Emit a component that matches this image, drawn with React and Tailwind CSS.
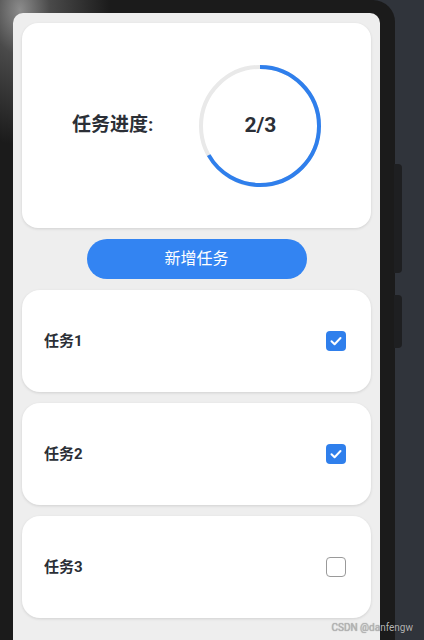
import React from 'react';

const TASKS = [
  { id: 1, name: '任务1', done: true },
  { id: 2, name: '任务2', done: true },
  { id: 3, name: '任务3', done: false },
];

function ProgressRing({ done, total }) {
  const r = 59;
  const c = 2 * Math.PI * r;
  const len = (done / total) * c;
  return (
    <div className="relative w-[122px] h-[122px] shrink-0">
      <svg width="122" height="122" viewBox="0 0 122 122" className="-rotate-90">
        <circle cx="61" cy="61" r={r} fill="none" stroke="#e9e9e9" strokeWidth="4" />
        <circle
          cx="61"
          cy="61"
          r={r}
          fill="none"
          stroke="#2f7fec"
          strokeWidth="4"
          strokeDasharray={`${len} ${c}`}
        />
      </svg>
      <div className="absolute inset-0 flex items-center justify-center text-[21px] font-bold text-[#2b2f36]">
        {done}/{total}
      </div>
    </div>
  );
}

function CheckBox({ checked }) {
  if (!checked) {
    return <div className="w-[20px] h-[20px] rounded-[4px] border-[1.5px] border-[#9a9a9a] bg-white" />;
  }
  return (
    <div className="w-[20px] h-[20px] rounded-[4px] bg-[#2f7fec] flex items-center justify-center">
      <svg width="14" height="14" viewBox="0 0 14 14">
        <path d="M2.5 7.2 L5.6 10.2 L11.5 4" fill="none" stroke="white" strokeWidth="2" strokeLinecap="round" strokeLinejoin="round" />
      </svg>
    </div>
  );
}

export default function App() {
  const doneCount = TASKS.filter((t) => t.done).length;

  return (
    <div
      className="relative w-[424px] h-[640px] overflow-hidden bg-[#30343b]"
      style={{ fontFamily: 'Roboto, "Noto Sans CJK SC", sans-serif' }}
    >
      {/* phone body */}
      <div className="relative w-[395px] h-[640px] bg-[#1b1b1b] rounded-tr-[22px] pt-[13px] pl-[13px] pr-[15px] flex flex-col">
        {/* gloss on top-left */}
        <div className="absolute left-0 top-0 w-[120px] h-[160px] bg-[radial-gradient(ellipse_at_20px_10px,#8c8c8c_0%,#4a4a4a_30px,rgba(27,27,27,0)_90px)] pointer-events-none" />

        {/* side buttons */}
        <div className="absolute right-[-7px] top-[164px] w-[8px] h-[109px] bg-[#1e1f21] rounded-r-[4px]" />
        <div className="absolute right-[-7px] top-[295px] w-[8px] h-[53px] bg-[#1e1f21] rounded-r-[4px]" />

        {/* screen */}
        <div className="relative flex-1 bg-[#eeeeee] rounded-t-[10px] px-[9px] pt-[10px] flex flex-col gap-[11px]">
          <div className="h-[205px] bg-white rounded-[16px] shadow-[0_1px_3px_rgba(0,0,0,0.12)] flex items-center pl-[50px] gap-[46px]">
            <span className="text-[19px] font-bold text-[#2b2f36]">任务进度:</span>
            <ProgressRing done={doneCount} total={TASKS.length} />
          </div>

          <div className="flex justify-center">
            <button className="w-[220px] h-[40px] rounded-full bg-[#3384f2] text-white text-[16px]">
              新增任务
            </button>
          </div>

          {TASKS.map((t) => (
            <div
              key={t.id}
              className="h-[102px] bg-white rounded-[18px] shadow-[0_1px_3px_rgba(0,0,0,0.12)] flex items-center justify-between pl-[22px] pr-[25px]"
            >
              <span className="text-[15px] font-bold text-[#2b2f36]">{t.name}</span>
              <CheckBox checked={t.done} />
            </div>
          ))}
        </div>
      </div>

      {/* watermark */}
      <div className="absolute right-[11px] bottom-[5px] text-[10px] text-[#b4b4b4] [text-shadow:0_0_1px_rgba(0,0,0,0.4)]">
        CSDN @danfengw
      </div>
    </div>
  );
}
